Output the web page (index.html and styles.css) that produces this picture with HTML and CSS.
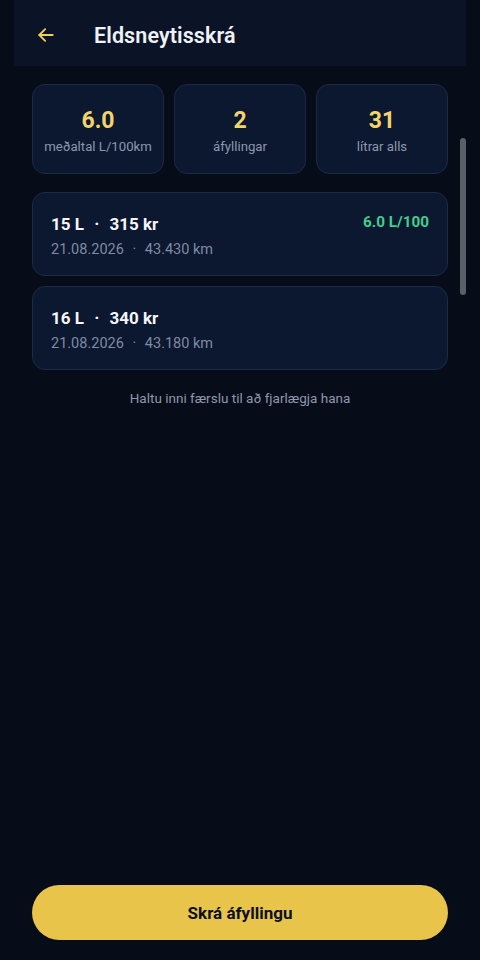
FILE: index.html
```html
<!DOCTYPE html>
<html lang="is">
<head>
    <meta charset="UTF-8">
    <meta name="viewport" content="width=device-width, initial-scale=1.0">
    <title>Eldsneytisskrá</title>
    <link rel="stylesheet" href="styles.css">
</head>
<body>
    <div class="app">
        <header class="topbar">
            <button class="back-btn" aria-label="Til baka">
                <svg width="20" height="20" viewBox="0 0 24 24" fill="none" stroke="currentColor" stroke-width="2.2" stroke-linecap="round" stroke-linejoin="round">
                    <path d="M20 12H4"/>
                    <path d="M11 5l-7 7 7 7"/>
                </svg>
            </button>
            <h1>Eldsneytisskrá</h1>
        </header>

        <main class="content">
            <div class="stats">
                <div class="stat">
                    <div class="stat-value">6.0</div>
                    <div class="stat-label">meðaltal L/100km</div>
                </div>
                <div class="stat">
                    <div class="stat-value">2</div>
                    <div class="stat-label">áfyllingar</div>
                </div>
                <div class="stat">
                    <div class="stat-value">31</div>
                    <div class="stat-label">lítrar alls</div>
                </div>
            </div>

            <div class="entries">
                <div class="entry">
                    <div class="entry-main">
                        <div class="entry-title">15 L <span class="dot">·</span> 315 kr</div>
                        <div class="entry-sub">21.08.2026 <span class="dot">·</span> 43.430 km</div>
                    </div>
                    <div class="entry-usage">6.0 L/100</div>
                </div>
                <div class="entry">
                    <div class="entry-main">
                        <div class="entry-title">16 L <span class="dot">·</span> 340 kr</div>
                        <div class="entry-sub">21.08.2026 <span class="dot">·</span> 43.180 km</div>
                    </div>
                </div>
            </div>

            <p class="hint">Haltu inni færslu til að fjarlægja hana</p>
        </main>

        <div class="scrollbar"></div>

        <footer class="footer">
            <button class="primary-btn">Skrá áfyllingu</button>
        </footer>
    </div>
</body>
</html>
```

FILE: styles.css
```css
* {
    box-sizing: border-box;
}

body {
    margin: 0;
    font-family: Roboto, "Noto Sans", sans-serif;
    background-color: #070d18;
    color: #f4f6fa;
}

.app {
    position: relative;
    height: 960px;
    display: flex;
    flex-direction: column;
}

.topbar {
    margin: 0 14px;
    height: 66px;
    background-color: #0b1427;
    display: flex;
    align-items: center;
    padding: 4px 0 0 20px;
}

.back-btn {
    background: none;
    border: none;
    padding: 0;
    width: 24px;
    height: 24px;
    color: #f0cf5c;
    display: flex;
    align-items: center;
    justify-content: center;
    cursor: pointer;
}

.topbar h1 {
    margin: 0 0 0 36px;
    font-size: 21.5px;
    font-weight: 600;
    color: #eef1f6;
    letter-spacing: 0.1px;
}

.content {
    flex: 1;
    padding: 18px 32px 0 32px;
}

.stats {
    display: grid;
    grid-template-columns: repeat(3, 1fr);
    gap: 10px;
}

.stat {
    height: 90px;
    background-color: #0c1730;
    border: 1px solid #1b2a47;
    border-radius: 13px;
    display: flex;
    flex-direction: column;
    align-items: center;
    justify-content: center;
    padding-top: 3px;
}

.stat-value {
    font-size: 23px;
    font-weight: 700;
    color: #f2d469;
    line-height: 28px;
}

.stat-label {
    font-size: 13.2px;
    color: #8c98ad;
    margin-top: 4px;
}

.entries {
    margin-top: 18px;
    display: flex;
    flex-direction: column;
    gap: 10px;
}

.entry {
    height: 84px;
    background-color: #0c1730;
    border: 1px solid #1b2a47;
    border-radius: 13px;
    padding: 20px 18px 0 18px;
    display: flex;
    justify-content: space-between;
    align-items: flex-start;
}

.entry-title {
    font-size: 17px;
    font-weight: 700;
    color: #f4f6fa;
    line-height: 22px;
}

.entry-title .dot {
    margin: 0 6px;
}

.entry-sub {
    margin-top: 6px;
    font-size: 14.5px;
    color: #7f8ba0;
    line-height: 18px;
}

.entry-sub .dot {
    margin: 0 5px;
}

.entry-usage {
    font-size: 15.3px;
    font-weight: 700;
    color: #3ecf8e;
    line-height: 22px;
    margin-top: -2px;
}

.hint {
    margin: 20px 0 0 0;
    text-align: center;
    font-size: 13.5px;
    color: #8c98ad;
}

.scrollbar {
    position: absolute;
    top: 138px;
    right: 14px;
    width: 6px;
    height: 157px;
    border-radius: 3px;
    background-color: #5b5f68;
}

.footer {
    padding: 0 32px 20px 32px;
}

.primary-btn {
    width: 100%;
    height: 55px;
    border: none;
    border-radius: 28px;
    background-color: #e8c44b;
    color: #0b1020;
    font-family: Roboto, "Noto Sans", sans-serif;
    font-size: 17px;
    font-weight: 700;
    cursor: pointer;
}
```
